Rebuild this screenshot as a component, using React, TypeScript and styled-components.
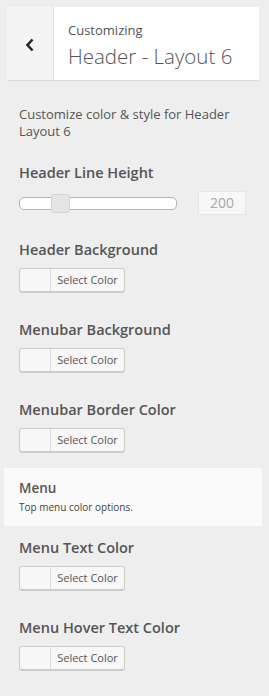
import React from "react"
import styled, { createGlobalStyle } from "styled-components"

const GlobalStyle = createGlobalStyle`
  html, body {
    margin: 0;
    padding: 0;
    background: #eeeeee;
    font-family: "Open Sans", "Liberation Sans", sans-serif;
    color: #555;
  }
`

const colorControls = [
  { label: "Header Background" },
  { label: "Menubar Background" },
  { label: "Menubar Border Color" },
]

const menuControls = [
  { label: "Menu Text Color" },
  { label: "Menu Hover Text Color" },
]

const ColorControl = ({ label }: { label: string }) => (
  <Control>
    <Heading>{label}</Heading>
    <ColorButton type="button">
      <Swatch />
      <ButtonLabel>Select Color</ButtonLabel>
    </ColorButton>
  </Control>
)

const App = () => {
  return (
    <>
      <GlobalStyle />
      <Panel>
        <TitleCard>
          <BackButton aria-label="Back">
            <svg width="10" height="14" viewBox="0 0 10 14">
              <polyline
                points="7.5,1.5 2.5,7 7.5,12.5"
                fill="none"
                stroke="#23282d"
                strokeWidth="2.6"
              />
            </svg>
          </BackButton>
          <TitleText>
            <Eyebrow>Customizing</Eyebrow>
            <Title>Header - Layout 6</Title>
          </TitleText>
        </TitleCard>

        <Description>Customize color &amp; style for Header Layout 6</Description>

        <SliderControl>
          <Heading>Header Line Height</Heading>
          <SliderRow>
            <Track>
              <Thumb />
            </Track>
            <NumberBox>200</NumberBox>
          </SliderRow>
        </SliderControl>

        {colorControls.map(c => (
          <ColorControl key={c.label} label={c.label} />
        ))}

        <Section>
          <SectionTitle>Menu</SectionTitle>
          <SectionNote>Top menu color options.</SectionNote>
        </Section>

        {menuControls.map(c => (
          <ColorControl key={c.label} label={c.label} />
        ))}
      </Panel>
    </>
  )
}

export default App

const Panel = styled.div`
  width: 269px;
  min-height: 696px;
  padding-top: 7px;
  box-sizing: border-box;
`

const TitleCard = styled.div`
  display: flex;
  margin: 0 10px 0 7px;
  height: 73px;
  background: #fff;
  border-bottom: 1px solid #dcdcdc;
`

const BackButton = styled.div`
  width: 47px;
  display: flex;
  align-items: center;
  justify-content: center;
  background: #f4f4f4;
  border-right: 1px solid #dddddd;
  padding-top: 2px;
  box-sizing: border-box;
`

const TitleText = styled.div`
  display: flex;
  flex-direction: column;
  padding: 13px 0 0 14px;
`

const Eyebrow = styled.span`
  font-size: 13px;
  line-height: 20px;
  color: #555;
`

const Title = styled.span`
  font-size: 20.5px;
  line-height: 32px;
  font-weight: 300;
  color: #555;
`

const Description = styled.p`
  margin: 25px 0 23px 19px;
  width: 230px;
  font-size: 13px;
  line-height: 17px;
  color: #555;
`

const Control = styled.div`
  padding: 0 19px;
  margin-bottom: 28px;
`

const SliderControl = styled(Control)`
  margin-bottom: 25px;
`

const Heading = styled.div`
  font-size: 14.5px;
  line-height: 20px;
  font-weight: 600;
  color: #555;
  margin-bottom: 8px;
`

const SliderRow = styled.div`
  display: flex;
  align-items: center;
  gap: 21px;
  height: 24px;
`

const Track = styled.div`
  position: relative;
  width: 158px;
  height: 13px;
  box-sizing: border-box;
  background: #fff;
  border: 1px solid #b4b4b4;
  border-radius: 5px;
`

const Thumb = styled.div`
  position: absolute;
  left: 31px;
  top: -4px;
  width: 19px;
  height: 19px;
  box-sizing: border-box;
  background: #e4e4e4;
  border: 1px solid #d6d6d6;
  border-radius: 3px;
`

const NumberBox = styled.div`
  width: 48px;
  height: 24px;
  box-sizing: border-box;
  background: #f7f7f7;
  border: 1px solid #e6e6e6;
  color: #a8a8a8;
  font-size: 14px;
  line-height: 22px;
  text-align: center;
`

const ColorButton = styled.button`
  display: flex;
  align-items: stretch;
  padding: 0;
  width: 106px;
  height: 24px;
  box-sizing: border-box;
  background: #f7f7f7;
  border: 1px solid #cccccc;
  border-radius: 3px;
  box-shadow: 0 1px 0 #cccccc;
  font-family: inherit;
  cursor: pointer;
`

const Swatch = styled.span`
  width: 30px;
  border-right: 1px solid #dcdcdc;
`

const ButtonLabel = styled.span`
  flex: 1;
  font-size: 11px;
  line-height: 22px;
  color: #555;
  text-align: center;
`

const Section = styled.div`
  margin: -12px 7px 12px 4px;
  padding: 11px 15px 12px;
  background: #fafafa;
`

const SectionTitle = styled.div`
  font-size: 13.5px;
  line-height: 18px;
  font-weight: 600;
  color: #555;
  margin-bottom: 3px;
`

const SectionNote = styled.div`
  font-size: 10px;
  line-height: 14px;
  color: #444;
`
